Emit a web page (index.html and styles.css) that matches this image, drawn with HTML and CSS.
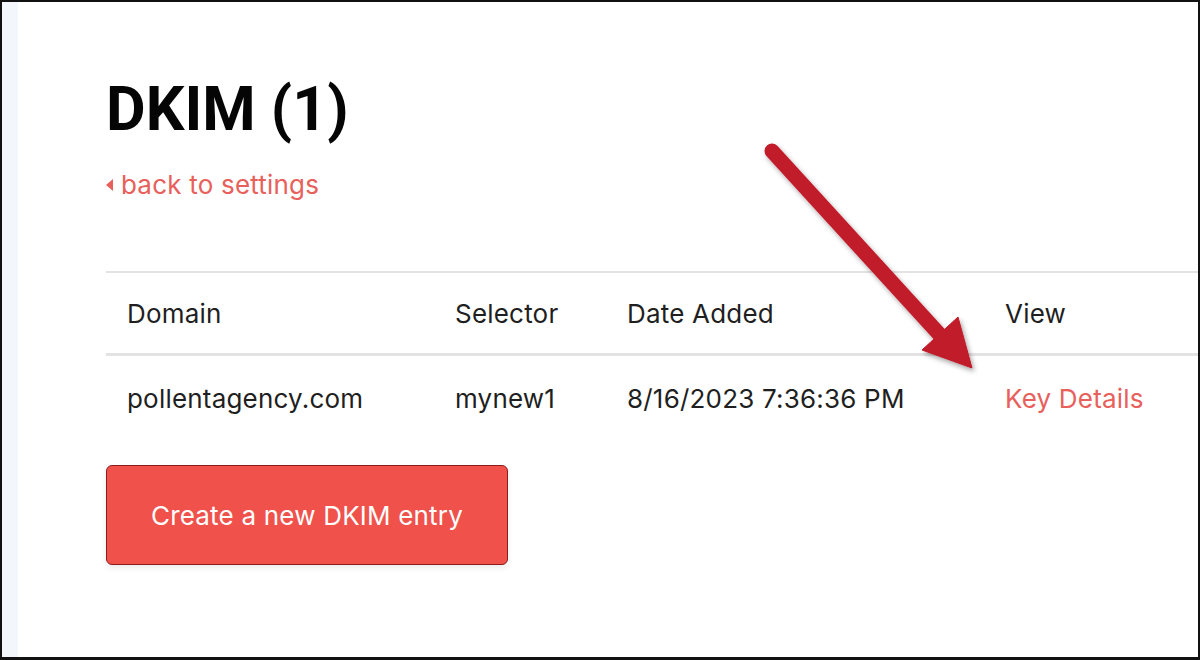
FILE: index.html
```html
<!DOCTYPE html>
<html lang="en">
  <head>
    <meta charset="UTF-8" />
    <meta name="viewport" content="width=device-width, initial-scale=1.0" />
    <title>DKIM</title>
    <link rel="stylesheet" href="styles.css">
  </head>
  <body>
    <div class="frame">
      <div class="rail"></div>
      <div class="main">
        <h1 class="title">DKIM (1)</h1>
        <a class="back-link" href="#"><span class="caret"></span>back to settings</a>

        <table class="dkim-table">
          <thead>
            <tr>
              <th class="col-domain">Domain</th>
              <th class="col-selector">Selector</th>
              <th class="col-date">Date Added</th>
              <th>View</th>
            </tr>
          </thead>
          <tbody>
            <tr>
              <td>pollentagency.com</td>
              <td>mynew1</td>
              <td>8/16/2023 7:36:36 PM</td>
              <td><a class="key-link" href="#">Key Details</a></td>
            </tr>
          </tbody>
        </table>

        <button class="create-btn" type="button">Create a new DKIM entry</button>
      </div>

      <!-- annotation arrow drawn over the screenshot -->
      <svg class="annotation" width="1200" height="660" viewBox="0 0 1200 660">
        <defs>
          <filter id="arrow-shadow" x="-20%" y="-20%" width="140%" height="140%">
            <feDropShadow dx="2" dy="3" stdDeviation="2.5" flood-color="#000" flood-opacity="0.35" />
          </filter>
        </defs>
        <g filter="url(#arrow-shadow)" fill="#c01a2a" stroke="#c01a2a">
          <line x1="772" y1="151" x2="940" y2="335" stroke-width="15" stroke-linecap="round" />
          <polygon points="972,368 922,350 958,317" stroke-width="1" stroke-linejoin="round" />
        </g>
      </svg>
    </div>
  </body>
</html>
```

FILE: styles.css
```css
html, body
{
  margin: 0;
  padding: 0;
}
body
{
  font-family: Inter, "Noto Sans", sans-serif;
  color: #1f1f1f;
  background-color: #ffffff;
}
.frame
{
  position: relative;
  display: flex;
  width: 1200px;
  height: 660px;
  box-sizing: border-box;
  border: 2px solid #111111;
  border-bottom-width: 3px;
  overflow: hidden;
}
.rail
{
  width: 16px;
  flex-shrink: 0;
  background-color: #f3f6fa;
}
.main
{
  flex: 1;
  padding: 70px 0 0 88px;
  min-width: 0;
}
.title
{
  margin: 0;
  font-family: Roboto, "Liberation Sans", sans-serif;
  font-size: 61px;
  font-weight: 700;
  line-height: 74px;
  color: #050505;
}
.back-link
{
  display: inline-flex;
  align-items: center;
  margin-top: 24px;
  font-size: 26px;
  letter-spacing: 0.2px;
  line-height: 30px;
  color: #e8605b;
  text-decoration: none;
}
.caret
{
  width: 0;
  height: 0;
  margin-right: 8px;
  border-top: 6px solid transparent;
  border-bottom: 6px solid transparent;
  border-right: 7px solid #e8605b;
}
.dkim-table
{
  width: calc(100% + 20px);
  margin-top: 71px;
  border-collapse: collapse;
  font-size: 26px;
  letter-spacing: 0.2px;
}
.dkim-table th,
.dkim-table td
{
  padding: 0 0 0 21px;
  text-align: left;
  font-weight: 400;
  white-space: nowrap;
}
.dkim-table th
{
  height: 80px;
  border-top: 2px solid #e3e3e3;
  border-bottom: 3px solid #e3e3e3;
}
.dkim-table td
{
  height: 84px;
}
.col-domain
{
  width: 307px;
}
.col-selector
{
  width: 151px;
}
.col-date
{
  width: 357px;
}
.key-link
{
  color: #e8605b;
  text-decoration: none;
}
.create-btn
{
  display: block;
  width: 402px;
  height: 100px;
  margin-top: 25px;
  background-color: #f0514b;
  border: 1px solid #8e1c1c;
  border-radius: 6px;
  box-shadow: 0 3px 6px rgba(0, 0, 0, 0.08);
  color: #ffffff;
  font-family: inherit;
  font-size: 26px;
  letter-spacing: 0.2px;
  cursor: pointer;
}
.annotation
{
  position: absolute;
  top: -2px;
  left: -2px;
  pointer-events: none;
}
```
